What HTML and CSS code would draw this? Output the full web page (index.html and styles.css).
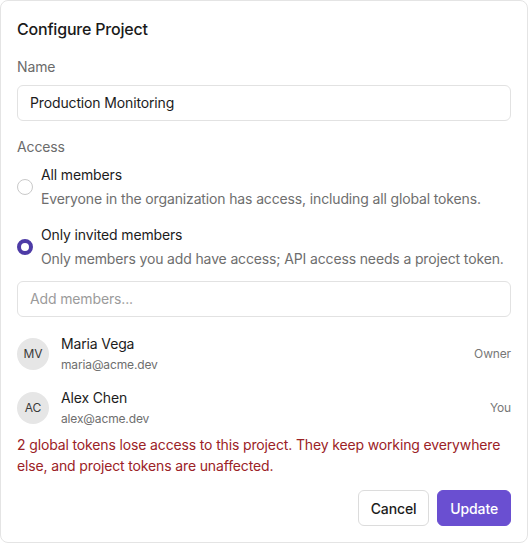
FILE: index.html
```html
<!DOCTYPE html>
<html lang="en">
<head>
<meta charset="utf-8">
<title>Configure Project</title>
<link rel="stylesheet" href="styles.css">
</head>
<body>
<div class="dialog">
  <h1 class="title">Configure Project</h1>

  <div class="field">
    <label class="label">Name</label>
    <div class="input">Production Monitoring</div>
  </div>

  <div class="field access">
    <div class="label">Access</div>
    <div class="options">
      <div class="option">
        <span class="radio"></span>
        <div class="option-text">
          <div class="option-name">All members</div>
          <div class="option-desc">Everyone in the organization has access, including all global tokens.</div>
        </div>
      </div>
      <div class="option">
        <span class="radio checked"></span>
        <div class="option-text">
          <div class="option-name">Only invited members</div>
          <div class="option-desc">Only members you add have access; API access needs a project token.</div>
        </div>
      </div>
    </div>
    <div class="input placeholder add">Add members...</div>
  </div>

  <div class="members">
    <div class="member">
      <div class="avatar">MV</div>
      <div class="member-info">
        <div class="member-name">Maria Vega</div>
        <div class="member-email">maria@acme.dev</div>
      </div>
      <div class="member-role">Owner</div>
    </div>
    <div class="member">
      <div class="avatar">AC</div>
      <div class="member-info">
        <div class="member-name">Alex Chen</div>
        <div class="member-email">alex@acme.dev</div>
      </div>
      <div class="member-role">You</div>
    </div>
  </div>

  <p class="warning">2 global tokens lose access to this project. They keep working everywhere else, and project tokens are unaffected.</p>

  <div class="actions">
    <button class="btn btn-secondary">Cancel</button>
    <button class="btn btn-primary">Update</button>
  </div>
</div>
</body>
</html>
```

FILE: styles.css
```css
* { box-sizing: border-box; }

html, body {
  margin: 0;
  padding: 0;
  background: #ffffff;
}

body {
  font-family: Inter, "Noto Sans", "Liberation Sans", sans-serif;
  font-size: 14px;
  line-height: 20px;
  letter-spacing: -0.14px;
  color: #1c1c1c;
}

.dialog {
  width: 528px;
  border: 1px solid #e4e4e4;
  border-radius: 8px;
  padding: 16px 16px 16px 16px;
  background: #fff;
}

.title {
  margin: 0;
  font-size: 16px;
  line-height: 24px;
  font-weight: 500;
  letter-spacing: -0.2px;
  color: #1a1a1a;
}

.field {
  margin-top: 16px;
}

.label {
  display: block;
  color: #6b6b6b;
  font-size: 14px;
  line-height: 20px;
}

.input {
  margin-top: 8px;
  height: 36px;
  border: 1px solid #e2e2e2;
  border-radius: 6px;
  padding: 0 12px;
  display: flex;
  align-items: center;
  color: #1c1c1c;
}

.input.placeholder {
  color: #9b9b9b;
}

.options {
  margin-top: 8px;
  display: flex;
  flex-direction: column;
  gap: 16px;
}

.option {
  display: flex;
  align-items: center;
  gap: 8px;
}

.radio {
  width: 16px;
  height: 16px;
  flex: none;
  border-radius: 50%;
  border: 1.5px solid #c9c9c9;
  background: #fff;
}

.radio.checked {
  border: 4.5px solid #4d3ba6;
}

.option-name {
  color: #1c1c1c;
}

.option-desc {
  margin-top: 4px;
  color: #6e6e6e;
}

.add {
  margin-top: 12px;
}

.members {
  margin-top: 17px;
  display: flex;
  flex-direction: column;
  gap: 14px;
}

.member {
  display: flex;
  align-items: center;
  gap: 12px;
}

.avatar {
  width: 32px;
  height: 32px;
  flex: none;
  border-radius: 50%;
  background: #e6e6e6;
  color: #3a3a3a;
  font-size: 12px;
  font-weight: 400;
  display: flex;
  align-items: center;
  justify-content: center;
}

.member-info {
  flex: 1;
}

.member-name {
  color: #1c1c1c;
  line-height: 20px;
}

.member-email {
  margin-top: 2px;
  font-size: 12px;
  line-height: 18px;
  color: #6e6e6e;
}

.member-role {
  font-size: 12px;
  color: #777;
}

.warning {
  margin: 6px 0 0 0;
  line-height: 21px;
  color: #9b2226;
}

.actions {
  margin-top: 14px;
  display: flex;
  justify-content: flex-end;
  gap: 8px;
}

.btn {
  height: 36px;
  padding: 0 12px;
  border-radius: 6px;
  font-family: inherit;
  font-size: 14px;
  font-weight: 500;
  letter-spacing: -0.14px;
  cursor: pointer;
}

.btn-secondary {
  background: #fff;
  border: 1px solid #dcdcdc;
  color: #1c1c1c;
}

.btn-primary {
  background: #6a4fd1;
  border: 1px solid #6a4fd1;
  color: #fff;
}
```
